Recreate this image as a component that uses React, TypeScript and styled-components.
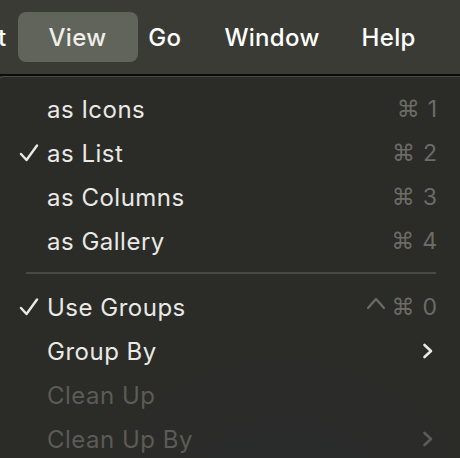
import React from 'react';
import styled, { createGlobalStyle } from 'styled-components';

const GlobalStyle = createGlobalStyle`
  html, body {
    margin: 0;
    padding: 0;
    background: #2b2b28;
    overflow: hidden;
  }
  body {
    font-family: Inter, "Liberation Sans", sans-serif;
    -webkit-font-smoothing: antialiased;
  }
`;

const Page = styled.div`
  width: 460px;
  height: 458px;
  overflow: hidden;
  display: flex;
  flex-direction: column;
  background: #2b2b28;
`;

const MenuBar = styled.div`
  height: 74px;
  flex: none;
  display: flex;
  align-items: center;
  background: #3b3b35;
  border-bottom: 2px solid #0c0c0b;
`;

const BarItem = styled.div<{ $active?: boolean; $pad?: string }>`
  height: 50px;
  display: flex;
  align-items: center;
  padding: ${(p) => p.$pad || '0 21px'};
  border-radius: 8px;
  font-size: 24px;
  font-weight: 500;
  letter-spacing: 0.3px;
  color: ${(p) => (p.$active ? '#eeeeea' : '#ffffff')};
  background: ${(p) => (p.$active ? '#61645b' : 'transparent')};
`;

const Menu = styled.div`
  flex: 1;
  margin-left: -6px;
  margin-right: -12px;
  padding: 10px 0 0 6px;
  background:
    radial-gradient(ellipse 180px 140px at 290px 420px, rgba(40, 48, 56, 0.35), transparent),
    #2b2b28;
  border-top: 1px solid #4b4b46;
  border-left: 1px solid #4b4b46;
  border-top-left-radius: 11px;
`;

const Row = styled.div<{ $disabled?: boolean }>`
  height: 44px;
  display: flex;
  align-items: center;
  padding-right: 35px;
  font-size: 24px;
  color: ${(p) => (p.$disabled ? '#5b5b57' : '#e9e9e6')};
`;

const Check = styled.div`
  width: 46px;
  flex: none;
  display: flex;
  justify-content: flex-start;
  padding-left: 18px;
  box-sizing: border-box;
`;

const Label = styled.span`
  flex: 1;
  letter-spacing: 0.5px;
`;

const Shortcut = styled.span`
  display: flex;
  align-items: center;
  gap: 8px;
  color: #6b6b67;
  font-size: 23px;
`;

const Keys = styled.span`
  display: flex;
  align-items: center;
  gap: 2px;
`;

const Glyph = styled.span`
  font-family: "DejaVu Sans", sans-serif;
  font-size: 23px;
`;

const Separator = styled.div`
  height: 2px;
  margin: 9px 36px 11px 25px;
  background: #494946;
`;

const CheckIcon = () => (
  <svg width="20" height="18" viewBox="0 0 20 18">
    <path d="M2 10 L7.5 16 L18 1.5" fill="none" stroke="#e9e9e6" strokeWidth="2.4" strokeLinecap="round" strokeLinejoin="round" />
  </svg>
);

const Chevron = ({ color }: { color: string }) => (
  <svg width="12" height="16" viewBox="0 0 12 16" style={{ marginRight: 3 }}>
    <path d="M2.5 2 L9 8 L2.5 14" fill="none" stroke={color} strokeWidth="2.6" strokeLinecap="round" strokeLinejoin="round" />
  </svg>
);

const Caret = () => (
  <svg width="20" height="14" viewBox="0 0 20 14" style={{ marginRight: 3, marginTop: -8 }}>
    <path d="M2 12 L10 3 L18 12" fill="none" stroke="#6b6b67" strokeWidth="2.2" strokeLinecap="round" strokeLinejoin="round" />
  </svg>
);

type Item = {
  label: string;
  checked?: boolean;
  disabled?: boolean;
  key?: string;
  ctrl?: boolean;
  submenu?: boolean;
};

const topItems: Item[] = [
  { label: 'as Icons', key: '1' },
  { label: 'as List', key: '2', checked: true },
  { label: 'as Columns', key: '3' },
  { label: 'as Gallery', key: '4' },
];

const bottomItems: Item[] = [
  { label: 'Use Groups', key: '0', ctrl: true, checked: true },
  { label: 'Group By', submenu: true },
  { label: 'Clean Up', disabled: true },
  { label: 'Clean Up By', disabled: true, submenu: true },
];

const MenuRow = ({ item }: { item: Item }) => (
  <Row $disabled={item.disabled}>
    <Check>{item.checked && <CheckIcon />}</Check>
    <Label>{item.label}</Label>
    {item.key && (
      <Shortcut>
        <Keys>
          {item.ctrl && <Caret />}
          <Glyph>⌘</Glyph>
        </Keys>
        <span>{item.key}</span>
      </Shortcut>
    )}
    {item.submenu && <Chevron color={item.disabled ? '#5b5b57' : '#e9e9e6'} />}
  </Row>
);

export default function App() {
  return (
    <Page>
      <GlobalStyle />
      <MenuBar>
        <BarItem $pad="0 12px 0 0" style={{ marginLeft: -2 }}>t</BarItem>
        <BarItem $active $pad="0 32px 0 30px">View</BarItem>
        <BarItem $pad="0 22px 0 10px">Go</BarItem>
        <BarItem>Window</BarItem>
        <BarItem>Help</BarItem>
      </MenuBar>
      <Menu>
        {topItems.map((it) => (
          <MenuRow key={it.label} item={it} />
        ))}
        <Separator />
        {bottomItems.map((it) => (
          <MenuRow key={it.label} item={it} />
        ))}
      </Menu>
    </Page>
  );
}
